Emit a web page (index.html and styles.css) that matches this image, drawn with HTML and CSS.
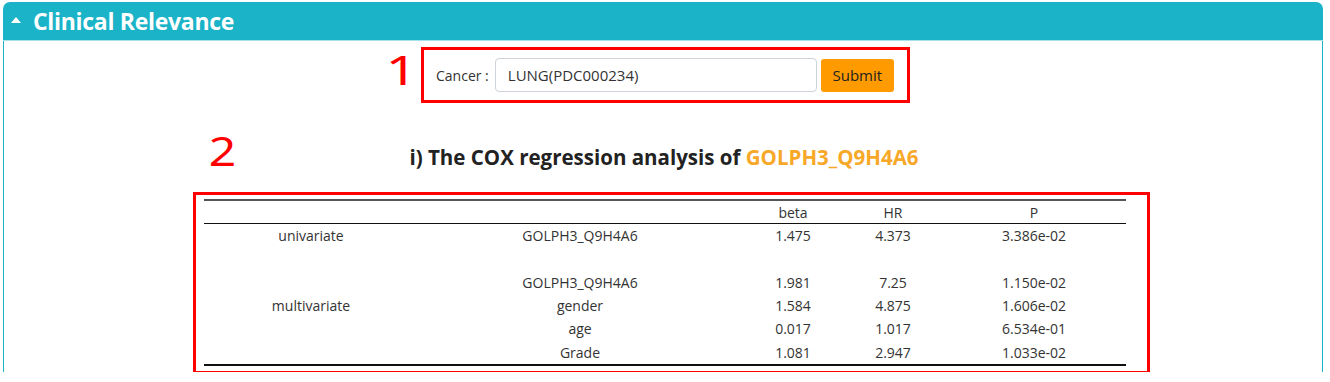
FILE: index.html
```html
<!DOCTYPE html>
<html>
<head>
	<meta charset="utf-8">
	<title>Clinical Relevance</title>
	<link rel="stylesheet" href="styles.css">
</head>
<body>
	<div class="panel">
		<div class="panel-head">
			<span class="caret"></span>
			<h2>Clinical Relevance</h2>
		</div>
		<div class="panel-body">
			<div class="form-wrap">
				<span class="mark mark1">1</span>
				<form class="cancer-form">
					<label for="cancer">Cancer :</label>
					<input type="text" id="cancer" value="LUNG(PDC000234)">
					<button type="button">Submit</button>
				</form>
			</div>
			<div class="title-wrap">
				<span class="mark mark2">2</span>
				<h3>i) The COX regression analysis of <span class="gene">GOLPH3_Q9H4A6</span></h3>
			</div>
			<div class="table-box">
				<table class="cox">
					<colgroup>
						<col style="width:214px"><col style="width:324px"><col style="width:102px"><col style="width:98px"><col style="width:184px">
					</colgroup>
					<thead>
						<tr><th></th><th></th><th>beta</th><th>HR</th><th>P</th></tr>
					</thead>
					<tbody>
						<tr><td>univariate</td><td>GOLPH3_Q9H4A6</td><td>1.475</td><td>4.373</td><td>3.386e-02</td></tr>
						<tr><td rowspan="5">multivariate</td><td></td><td></td><td></td><td></td></tr>
						<tr><td>GOLPH3_Q9H4A6</td><td>1.981</td><td>7.25</td><td>1.150e-02</td></tr>
						<tr><td>gender</td><td>1.584</td><td>4.875</td><td>1.606e-02</td></tr>
						<tr><td>age</td><td>0.017</td><td>1.017</td><td>6.534e-01</td></tr>
						<tr><td>Grade</td><td>1.081</td><td>2.947</td><td>1.033e-02</td></tr>
					</tbody>
				</table>
			</div>
		</div>
	</div>
</body>
</html>
```

FILE: styles.css
```css
body{
	margin: 0;
	padding: 2px 0 0 3px;
	font-family: "Open Sans", "Noto Sans", sans-serif;
	color: #333;
	background: #fff;
}
.panel{
	width: 1320px;
}
.panel-head{
	height: 38px;
	background-color: #1bb3c7;
	border-radius: 7px 7px 0 0;
	border-bottom: 1px solid #a6e0e8;
	display: flex;
	align-items: center;
	padding-left: 8px;
}
.caret{
	width: 0;
	height: 0;
	border-left: 5px solid transparent;
	border-right: 5px solid transparent;
	border-bottom: 6px solid #fff;
	margin-right: 12px;
	margin-top: -2px;
}
.panel-head h2{
	margin: 0;
	color: #fff;
	font-size: 23px;
	font-weight: 700;
	letter-spacing: -0.3px;
}
.panel-body{
	border-left: 1px solid #1bb3c7;
	border-right: 1px solid #1bb3c7;
	height: 331px;
	padding-top: 6px;
	box-sizing: border-box;
}
.form-wrap{
	display: flex;
	justify-content: center;
	padding-left: 5px;
}
.cancer-form{
	position: relative;
	width: 489px;
	height: 56px;
	box-sizing: border-box;
	border: 3px solid #f00;
	display: flex;
	align-items: center;
	padding-left: 12px;
	margin: 0;
}
.form-wrap, .title-wrap{
	position: relative;
}
.mark{
	position: absolute;
	color: #f00;
	font-family: "Noto Sans", sans-serif;
	font-size: 40px;
	line-height: 1;
}
.mark1{
	left: 386px;
	top: 3px;
	transform: scaleX(1.4);
}
.mark2{
	left: 207px;
	top: 28px;
	transform: scaleX(1.2);
}
.cancer-form label{
	font-size: 14px;
	color: #333;
	margin-right: 6px;
}
.cancer-form input{
	width: 322px;
	height: 34px;
	box-sizing: border-box;
	border: 1px solid #ced4da;
	border-radius: 4px;
	padding: 0 12px;
	font-family: inherit;
	font-size: 15px;
	color: #333;
	margin-right: 4px;
}
.cancer-form button{
	width: 73px;
	height: 33px;
	border: none;
	border-radius: 3px;
	background-color: #ff9b00;
	font-family: inherit;
	font-size: 15px;
	color: #222;
}
.title-wrap{
	height: 89px;
	display: flex;
	align-items: center;
	justify-content: center;
	padding-left: 2px;
	padding-top: 19px;
	box-sizing: border-box;
}
.title-wrap h3{
	margin: 0;
	font-size: 20.5px;
	font-weight: 700;
	color: #222;
}
.gene{
	color: #f7a829;
}
.table-box{
	width: 957px;
	margin-left: 189px;
	border: 3px solid #f00;
	padding: 4px 21px 5px 8px;
	box-sizing: border-box;
}
.cox{
	width: 922px;
	border-collapse: collapse;
	table-layout: fixed;
	font-size: 14px;
	color: #333;
	border-top: 2px solid #555;
	border-bottom: 2px solid #111;
}
.cox th{
	font-weight: 400;
	height: 22px;
	padding: 0;
	border-bottom: 1px solid #111;
}
.cox td{
	height: 23.3px;
	padding: 0;
	text-align: center;
	vertical-align: middle;
}
```
